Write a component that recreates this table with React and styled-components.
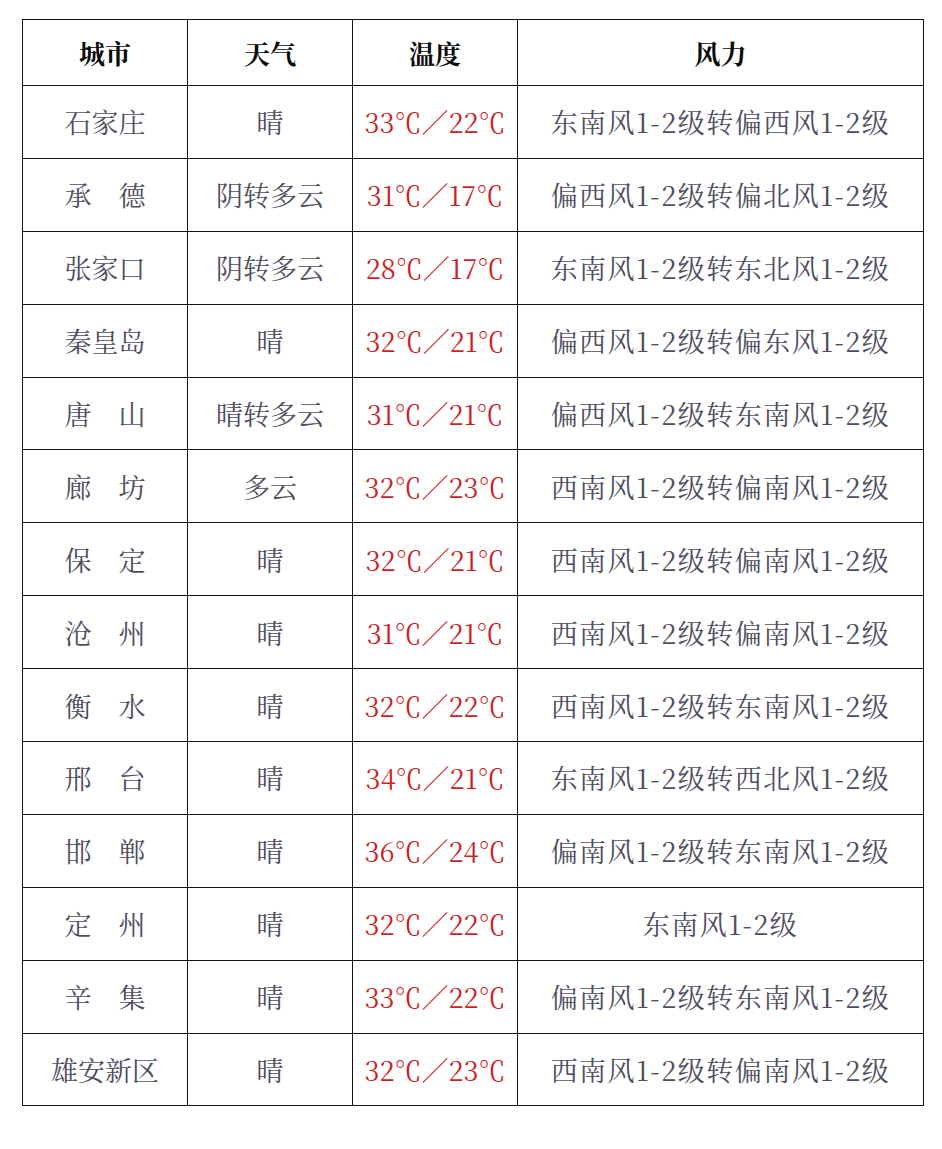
import React from "react";
import styled, { createGlobalStyle } from "styled-components";

const GlobalStyle = createGlobalStyle`
  html, body {
    margin: 0;
    padding: 0;
    background: #ffffff;
  }
  body {
    font-family: "Noto Serif CJK SC", "Liberation Serif", "Noto Sans CJK SC", serif;
  }
`;

const Page = styled.div`
  padding: 19px 20px 0 22px;
  width: 942px;
  box-sizing: border-box;
`;

const Table = styled.table`
  width: 901px;
  border-collapse: collapse;
  table-layout: fixed;
`;

const Col = styled.col`
  width: ${(p) => p.$w}px;
`;

const HeadCell = styled.th`
  height: 65px;
  border: 1.5px solid #141414;
  font-size: 26px;
  font-weight: 700;
  color: #0a0a0a;
  text-align: center;
  vertical-align: middle;
  padding: 0;
`;

const Cell = styled.td`
  height: 72.9px;
  border: 1.5px solid #141414;
  font-size: 27px;
  letter-spacing: ${(p) => (p.$wide ? "1.5px" : "0")};
  color: ${(p) => (p.$hot ? "#cc1f26" : "#4f4d5e")};
  text-align: center;
  vertical-align: middle;
  padding: 0;
  box-sizing: border-box;
  white-space: nowrap;
`;

const rows = [
  ["石家庄", "晴", "33℃／22℃", "东南风1-2级转偏西风1-2级"],
  ["承　德", "阴转多云", "31℃／17℃", "偏西风1-2级转偏北风1-2级"],
  ["张家口", "阴转多云", "28℃／17℃", "东南风1-2级转东北风1-2级"],
  ["秦皇岛", "晴", "32℃／21℃", "偏西风1-2级转偏东风1-2级"],
  ["唐　山", "晴转多云", "31℃／21℃", "偏西风1-2级转东南风1-2级"],
  ["廊　坊", "多云", "32℃／23℃", "西南风1-2级转偏南风1-2级"],
  ["保　定", "晴", "32℃／21℃", "西南风1-2级转偏南风1-2级"],
  ["沧　州", "晴", "31℃／21℃", "西南风1-2级转偏南风1-2级"],
  ["衡　水", "晴", "32℃／22℃", "西南风1-2级转东南风1-2级"],
  ["邢　台", "晴", "34℃／21℃", "东南风1-2级转西北风1-2级"],
  ["邯　郸", "晴", "36℃／24℃", "偏南风1-2级转东南风1-2级"],
  ["定　州", "晴", "32℃／22℃", "东南风1-2级"],
  ["辛　集", "晴", "33℃／22℃", "偏南风1-2级转东南风1-2级"],
  ["雄安新区", "晴", "32℃／23℃", "西南风1-2级转偏南风1-2级"],
];

export default function App() {
  return (
    <Page>
      <GlobalStyle />
      <Table>
        <colgroup>
          <Col $w={165} />
          <Col $w={165} />
          <Col $w={165} />
          <Col $w={406} />
        </colgroup>
        <thead>
          <tr>
            <HeadCell>城市</HeadCell>
            <HeadCell>天气</HeadCell>
            <HeadCell>温度</HeadCell>
            <HeadCell>风力</HeadCell>
          </tr>
        </thead>
        <tbody>
          {rows.map(([city, weather, temp, wind]) => (
            <tr key={city}>
              <Cell>{city}</Cell>
              <Cell>{weather}</Cell>
              <Cell $hot>{temp}</Cell>
              <Cell $wide>{wind}</Cell>
            </tr>
          ))}
        </tbody>
      </Table>
    </Page>
  );
}
